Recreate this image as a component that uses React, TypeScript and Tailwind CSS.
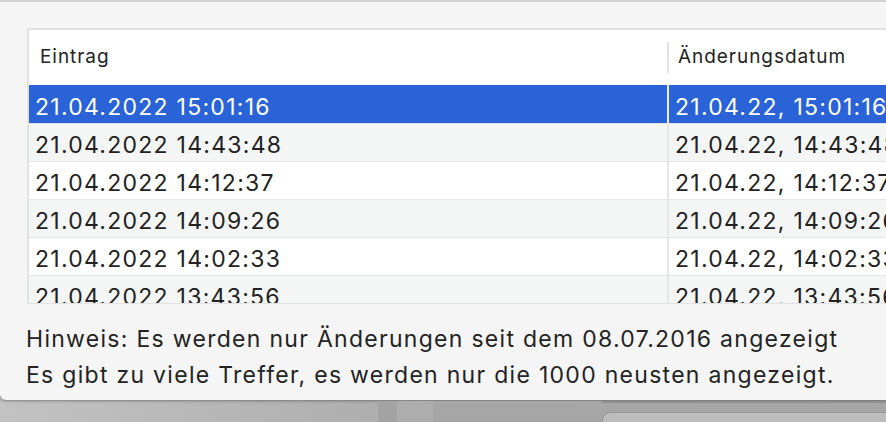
const rows = [
  ["21.04.2022 15:01:16", "21.04.22, 15:01:16"],
  ["21.04.2022 14:43:48", "21.04.22, 14:43:48"],
  ["21.04.2022 14:12:37", "21.04.22, 14:12:37"],
  ["21.04.2022 14:09:26", "21.04.22, 14:09:26"],
  ["21.04.2022 14:02:33", "21.04.22, 14:02:33"],
  ["21.04.2022 13:43:56", "21.04.22, 13:43:56"],
]

function Row({ cells, index }: { cells: string[]; index: number }) {
  const selected = index === 0
  const bg = selected ? "bg-[#2a62d8] text-white" : index % 2 === 1 ? "bg-[#f4f5f5] text-[#222]" : "bg-white text-[#222]"
  return (
    <div className={`flex h-[38px] shrink-0 items-center ${bg} ${selected ? "" : "border-t border-[#e4e4e4]"}`}>
      <div className="w-[638px] shrink-0 pl-[6px] pt-[6px] leading-none">{cells[0]}</div>
      <div className={`h-full w-[2px] shrink-0 ${selected ? "bg-[#e9eefb]" : "bg-[#e6e6e6]"}`} />
      <div className="shrink-0 whitespace-nowrap pl-[6px] pt-[6px] leading-none">{cells[1]}</div>
    </div>
  )
}

export default function App() {
  return (
    <div
      className="flex h-[422px] w-[886px] flex-col overflow-hidden bg-gradient-to-r from-[#c2c2c2] via-[#ababab] to-[#a4a4a4]"
      style={{ fontFamily: "Inter, 'Noto Sans', sans-serif" }}>
      <div className="flex h-[400px] shrink-0 flex-col rounded-bl-[6px] border-t-2 border-[#d2d2d2] bg-[#f5f5f5] pl-[27px] pt-[26px] shadow-[0_1px_3px_rgba(0,0,0,0.35)]">
        <div className="flex h-[276px] w-[900px] flex-col overflow-hidden border-b border-l-2 border-t-2 border-[#e2e2e2] bg-white">
          <div className="flex h-[55px] shrink-0 items-center text-[19px] tracking-[0.05em] text-[#222]">
            <div className="w-[638px] shrink-0 pl-[11px]">Eintrag</div>
            <div className="h-[31px] w-[2px] shrink-0 bg-[#e2e2e2]" />
            <div className="pl-[9px]">Änderungsdatum</div>
          </div>
          <div className="flex flex-col overflow-hidden text-[23px] tracking-[0.055em]">
            {rows.map((r, i) => (
              <Row key={r[0]} cells={r} index={i} />
            ))}
          </div>
        </div>
        <div className="mt-[17px] flex flex-col text-[23px] leading-[36px] tracking-[0.056em] text-[#232323]">
          <p className="-ml-[1px]">Hinweis: Es werden nur Änderungen seit dem 08.07.2016 angezeigt</p>
          <p className="-ml-[1px]">Es gibt zu viele Treffer, es werden nur die 1000 neusten angezeigt.</p>
        </div>
      </div>
      <div className="flex flex-1 pt-[1px]">
        <div className="w-[378px] shrink-0" />
        <div className="w-[19px] shrink-0 bg-[#a3a3a3]" />
        <div className="w-[36px] shrink-0 bg-[#adadad]" />
        <div className="w-[169px] shrink-0 bg-[#a6a6a6]" />
        <div className="flex flex-1 flex-col bg-[#a6a6a6]">
          <div className="h-[2px] bg-[#8f8f8f]" />
          <div className="mt-[9px] flex-1 rounded-tl-[8px] border-l border-t border-[#959595] bg-[#bdbdbd]" />
        </div>
      </div>
    </div>
  )
}
